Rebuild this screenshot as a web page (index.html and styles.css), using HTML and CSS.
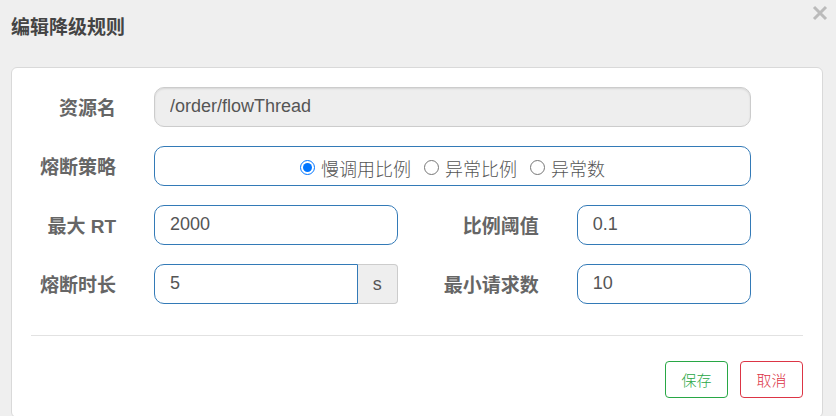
FILE: index.html
```html
<!DOCTYPE html>
<html lang="zh-CN">
<head>
<meta charset="utf-8">
<meta name="viewport" content="width=device-width, initial-scale=1">
<title>编辑降级规则</title>
<link rel="stylesheet" href="styles.css">
</head>
<body>
<main class="dialog">
  <header class="dialog-header">
    <h1 class="dialog-title">编辑降级规则</h1>
    <button class="close" type="button" aria-label="关闭">
      <svg viewBox="0 0 16 16" width="16" height="16" aria-hidden="true"><path d="M2 2L14 14M14 2L2 14" fill="none" stroke="currentColor" stroke-width="3"/></svg>
    </button>
  </header>
  <form class="card">
    <div class="fields">
      <label class="label" for="resource">资源名</label>
      <input class="control wide" id="resource" type="text" value="/order/flowThread" readonly>

      <span class="label" id="strategy-label">熔断策略</span>
      <div class="control wide radios" role="radiogroup" aria-labelledby="strategy-label">
        <label class="radio"><input type="radio" name="strategy" checked><span>慢调用比例</span></label>
        <label class="radio"><input type="radio" name="strategy"><span>异常比例</span></label>
        <label class="radio"><input type="radio" name="strategy"><span>异常数</span></label>
      </div>

      <label class="label" for="max-rt">最大 RT</label>
      <input class="control" id="max-rt" type="text" value="2000">
      <label class="label" for="ratio">比例阈值</label>
      <input class="control" id="ratio" type="text" value="0.1">

      <label class="label" for="duration">熔断时长</label>
      <div class="group">
        <input class="control" id="duration" type="text" value="5">
        <span class="unit">s</span>
      </div>
      <label class="label" for="min-requests">最小请求数</label>
      <input class="control" id="min-requests" type="text" value="10">
    </div>
    <hr class="divider">
    <div class="actions">
      <button class="button save" type="button">保存</button>
      <button class="button cancel" type="button">取消</button>
    </div>
  </form>
</main>
</body>
</html>
```
FILE: styles.css
```css
* {
  box-sizing: border-box;
}

body {
  margin: 0;
  overflow: hidden;
  background: #efefef;
  color: #555;
  font-family: "Liberation Sans", "Noto Sans CJK SC", sans-serif;
  font-size: 18px;
}

.dialog {
  padding: 0 13px 0 11px;
}

.dialog-header {
  display: flex;
  justify-content: space-between;
  align-items: flex-start;
  height: 67px;
}

.dialog-title {
  margin: 14px 0 0;
  color: #444;
  font-size: 19px;
  line-height: 28px;
}

.close {
  display: flex;
  margin: 5px -5px 0 0;
  padding: 0;
  border: 0;
  background: none;
  color: #bbb;
}

.card {
  padding: 19px;
  border: 1px solid #d9d9d9;
  border-radius: 6px;
  background: #fff;
}

.fields {
  display: grid;
  grid-template-columns: 85px 7fr 103px 5fr;
  gap: 19px 38px;
  padding-right: 52px;
}

.label {
  padding-top: 4px;
  color: #666;
  font-size: 19px;
  font-weight: 700;
  line-height: 36px;
  text-align: right;
  white-space: nowrap;
}

.control {
  width: 100%;
  min-width: 0;
  height: 40px;
  padding: 0 15px 1px;
  border: 1px solid #337ab7;
  border-radius: 10px;
  background: #fff;
  color: #555;
  font: inherit;
}

.control:read-only:not(div) {
  border-color: #ccc;
  background: #eee;
  box-shadow: inset 0 1px 2px rgba(0, 0, 0, 0.1);
}

.wide {
  grid-column: 2 / -1;
}

.radios {
  display: flex;
  justify-content: center;
  align-items: center;
  gap: 13px;
  padding-top: 4px;
}

.radio {
  display: flex;
  align-items: center;
  gap: 6px;
  white-space: nowrap;
}

.radio input {
  width: 15px;
  height: 15px;
  margin: 0;
  accent-color: #0075ff;
}

.radio span {
  padding-top: 5px;
  font-weight: 300;
  line-height: 26px;
}

.group {
  display: flex;
}

.group .control {
  flex: 1;
  border-radius: 10px 0 0 10px;
}

.unit {
  width: 40px;
  border: 1px solid #ccc;
  border-left: 0;
  border-radius: 0 4px 4px 0;
  background: #eee;
  line-height: 38px;
  text-align: center;
}

.divider {
  margin: 31px 0 25px;
  border: 0;
  border-top: 1px solid #e2e2e2;
}

.actions {
  display: flex;
  justify-content: flex-end;
  gap: 12px;
}

.button {
  width: 63px;
  height: 37px;
  padding: 0;
  border: 1px solid;
  border-radius: 4px;
  background: #fff;
  font: inherit;
  font-size: 15px;
  font-weight: 300;
}

.save {
  color: #28a745;
}

.cancel {
  color: #dc3545;
}
```
